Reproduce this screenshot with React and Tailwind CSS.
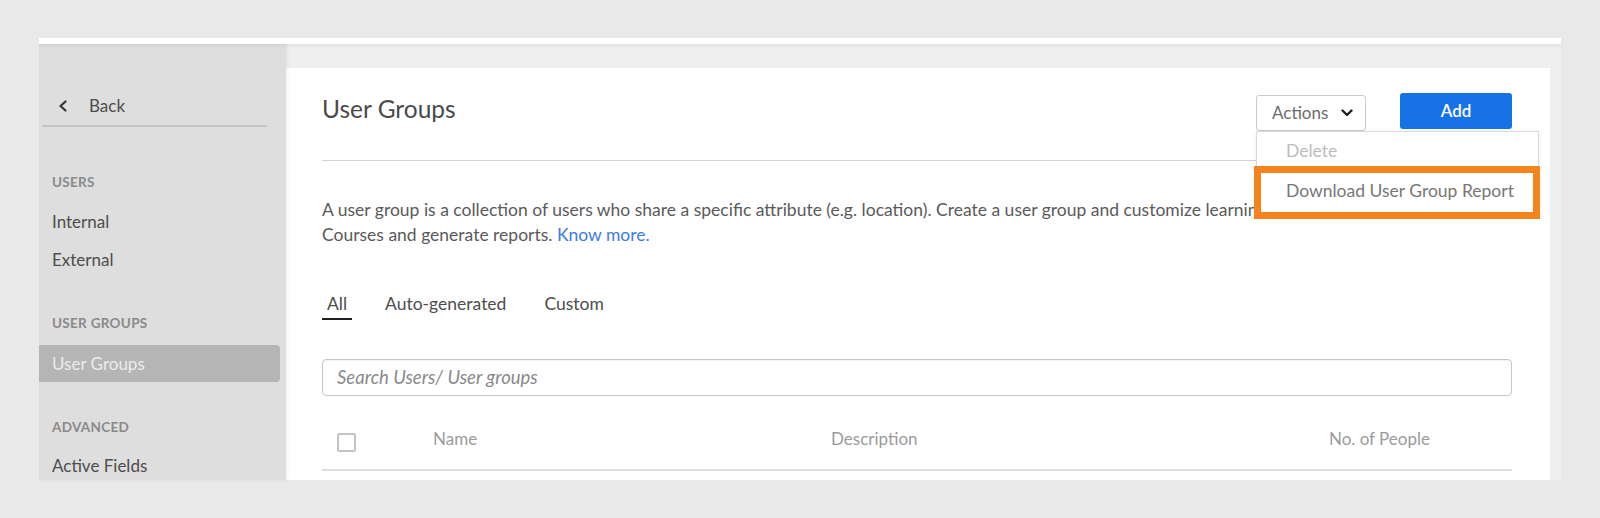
import React from "react";

const SideLabel = ({ children, className = "" }) => (
  <div className={`h-[20px] pl-[13px] flex items-center text-[13.5px] font-bold tracking-[0.3px] text-[#8a8a8a] ${className}`}>
    {children}
  </div>
);

const SideItem = ({ children, active = false, className = "" }) => (
  <div
    className={`flex items-center pl-[13px] text-[17px] ${
      active
        ? "h-[37px] mr-[6px] rounded-r-[4px] bg-[#b5b5b5] text-[#ececec]"
        : "h-[38px] text-[#4d4d4d]"
    } ${className}`}
  >
    {children}
  </div>
);

const Sidebar = () => (
  <aside className="w-[247px] shrink-0 h-full overflow-hidden bg-[#dedede] shadow-[2px_0_4px_rgba(0,0,0,0.05)] relative z-10">
    <div className="ml-[3px] w-[225px] pt-[50px] pb-[7px] border-b-[2px] border-[#c4c4c4] flex items-center">
      <svg width="10" height="12" viewBox="0 0 10 12" className="ml-[16px]">
        <path d="M7.5 1.5 L2.5 6 L7.5 10.5" fill="none" stroke="#333" strokeWidth="2.2" strokeLinecap="round" strokeLinejoin="round" />
      </svg>
      <span className="ml-[21px] leading-[24px] text-[17px] text-[#4d4d4d]">Back</span>
    </div>

    <SideLabel className="mt-[45px]">USERS</SideLabel>
    <SideItem className="mt-[11px]">Internal</SideItem>
    <SideItem>External</SideItem>

    <SideLabel className="mt-[34px]">USER GROUPS</SideLabel>
    <SideItem active className="mt-[12px]">User Groups</SideItem>

    <SideLabel className="mt-[35px]">ADVANCED</SideLabel>
    <SideItem className="mt-[10px]">Active Fields</SideItem>
  </aside>
);

const ActionsMenu = () => (
  <div className="relative mt-[2px]">
    <button className="h-[36px] w-[110px] flex items-center pl-[15px] border border-[#cacaca] rounded-[3px] bg-white text-[17px] text-[#6b6b6b]">
      Actions
      <svg width="12" height="8" viewBox="0 0 12 8" className="ml-[13px]">
        <path d="M1.5 1.5 L6 6 L10.5 1.5" fill="none" stroke="#1f1f1f" strokeWidth="2.4" strokeLinecap="round" strokeLinejoin="round" />
      </svg>
    </button>

    <div className="absolute left-0 top-[36px] w-[283px] bg-white border border-[#d9d9d9] shadow-[0_2px_6px_rgba(0,0,0,0.08)] z-20">
      <div className="h-[39px] flex items-center pl-[29px] text-[17.5px] text-[#bdbdbd]">Delete</div>
      <div className="h-[41px] flex items-center pl-[29px] text-[17.5px] text-[#777777]">
        Download User Group Report
      </div>
      <div className="absolute left-[-3px] right-[-2px] top-[34px] h-[53px] border-[7px] border-[#f5841f] pointer-events-none" />
    </div>
  </div>
);

const Tab = ({ children, active = false }) => (
  <button
    className={`px-[5px] pb-[2px] leading-[24px] text-[17.5px] text-[#4d4d4d] border-b-[2px] ${
      active ? "border-[#1f1f1f]" : "border-transparent"
    }`}
  >
    {children}
  </button>
);

const Panel = () => (
  <div className="h-full bg-white pl-[36px] pr-[38px] overflow-hidden">
    <div className="h-[93px] pt-[25px] border-b border-[#d2d2d2] flex items-start justify-between relative z-20">
      <h1 className="leading-[32px] text-[24.5px] text-[#4a4a4a]">User Groups</h1>
      <div className="flex items-start">
        <ActionsMenu />
        <button className="ml-[34px] h-[36px] w-[112px] rounded-[3px] bg-[#1672e6] text-white text-[17px] font-semibold">
          Add
        </button>
      </div>
    </div>

    <p className="mt-[36px] text-[17.5px] leading-[25px] text-[#5a5a5a]">
      A user group is a collection of users who share a specific attribute (e.g. location). Create a user group and customize learning paths for
      <br />
      Courses and generate reports. <a className="text-[#3b7be2]">Know more.</a>
    </p>

    <div className="mt-[45px] flex gap-[28px]">
      <Tab active>All</Tab>
      <Tab>Auto-generated</Tab>
      <Tab>Custom</Tab>
    </div>

    <div className="mt-[39px] h-[37px] flex items-center pl-[14px] border border-[#c8c8c8] rounded-[4px] shadow-[inset_0_1px_2px_rgba(0,0,0,0.06)]">
      <span className="italic text-[18.5px] text-[#8a8a8a]">Search Users/ User groups</span>
    </div>

    <div className="mt-[20px] h-[55px] flex items-center border-b-[2px] border-[#dedede] text-[17px] text-[#9b9b9b]">
      <span className="ml-[15px] w-[19px] h-[19px] rounded-[2px] border-[2px] border-[#c4c4c4]" />
      <span className="ml-[77px] w-[398px] pb-[7px]">Name</span>
      <span className="flex-1 pb-[7px]">Description</span>
      <span className="mr-[82px] pb-[7px]">No. of People</span>
    </div>
  </div>
);

export default function App() {
  return (
    <div className="w-full h-[518px] bg-[#e9e9e9] pt-[38px] px-[39px] font-['Lato',sans-serif]">
      <div className="h-[442px] flex flex-col">
        <div className="h-[6px] bg-white shadow-[0_2px_3px_rgba(0,0,0,0.06)] relative z-20" />
        <div className="flex-1 flex min-h-0">
          <Sidebar />
          <main className="flex-1 bg-[#efefef] pt-[24px] pr-[11px]">
            <Panel />
          </main>
        </div>
      </div>
    </div>
  );
}
